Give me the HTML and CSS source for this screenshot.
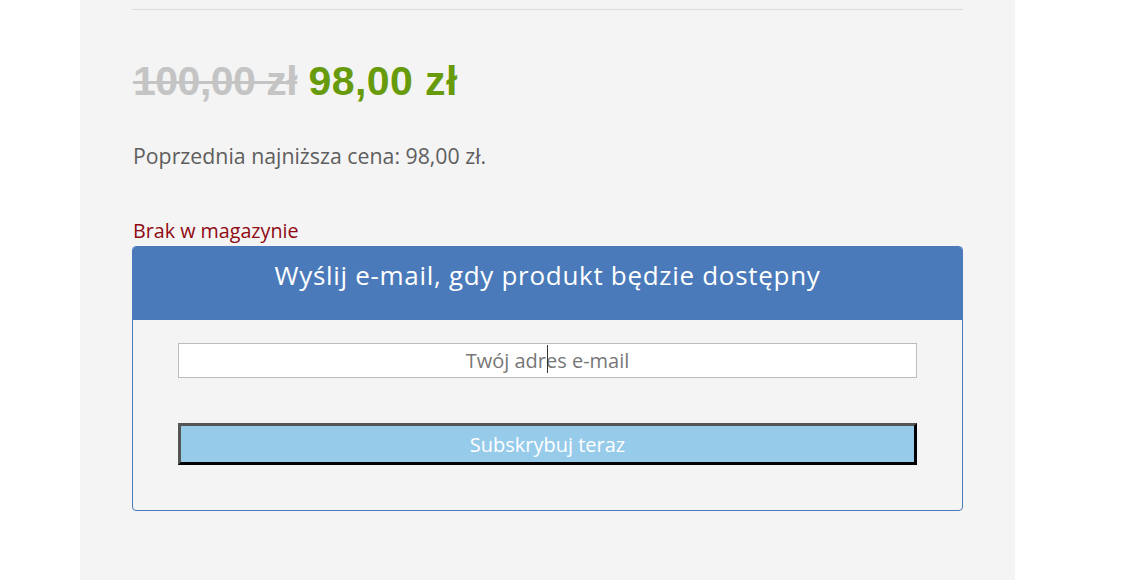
FILE: index.html
```html
<!DOCTYPE html>
<html lang="pl">
<head>
<meta charset="utf-8">
<link rel="stylesheet" href="styles.css">
</head>
<body>
<div class="panel">
  <div class="rule"></div>
  <p class="price"><del class="old">100,00 zł</del> <ins class="new">98,00 zł</ins></p>
  <p class="lowest">Poprzednia najniższa cena: 98,00 zł.</p>
  <p class="stock">Brak w magazynie</p>
  <div class="notify">
    <div class="notify-head">Wyślij e-mail, gdy produkt będzie dostępny</div>
    <div class="notify-body">
      <div class="field">
        <input class="email" type="text" placeholder="Twój adres e-mail">
        <span class="caret"></span>
      </div>
      <button class="subscribe" type="button">Subskrybuj teraz</button>
    </div>
  </div>
</div>
</body>
</html>
```
FILE: styles.css
```css
html, body {
  margin: 0;
  padding: 0;
  background: #ffffff;
}
body {
  font-family: "Open Sans", "Liberation Sans", sans-serif;
}
.panel {
  margin-left: 80px;
  width: 935px;
  height: 580px;
  box-sizing: border-box;
  padding: 9px 52px 0 52px;
  background: #f4f4f4;
}
.rule {
  height: 1px;
  background: #dcdcdc;
}
.price {
  margin: 47px 0 0 1px;
  font-family: "Liberation Sans", Arial, sans-serif;
  font-weight: bold;
  font-size: 41px;
  line-height: 48px;
}
.old {
  color: #c4c4c4;
  letter-spacing: -0.5px;
  text-decoration: line-through;
  text-decoration-thickness: 3px;
}
.new {
  color: #679b0b;
  letter-spacing: 0.4px;
  text-decoration: none;
}
.lowest {
  margin: 37px 0 0 1px;
  font-size: 21.3px;
  line-height: 28px;
  color: #5e5e5e;
}
.stock {
  margin: 47px 0 0 1px;
  font-size: 19.7px;
  line-height: 27px;
  color: #8f0a12;
}
.notify {
  margin-top: 2px;
  border: 1px solid #4a7aba;
  border-radius: 4px;
  overflow: hidden;
}
.notify-head {
  background: #4a7aba;
  color: #ffffff;
  text-align: center;
  font-size: 26px;
  letter-spacing: 0.7px;
  line-height: 34px;
  padding: 11px 0 28px;
}
.notify-body {
  padding: 23px 45px 45px;
  display: flex;
  flex-direction: column;
  gap: 45px;
}
.field {
  position: relative;
}
.email {
  display: block;
  width: 100%;
  box-sizing: border-box;
  height: 35px;
  border: 1px solid #bcbcbc;
  background: #ffffff;
  font-family: "Open Sans", "Liberation Sans", sans-serif;
  font-size: 20px;
  text-align: center;
  padding: 0;
  outline: none;
}
.email::placeholder {
  color: #777777;
}
.caret {
  position: absolute;
  left: 369px;
  top: 2px;
  width: 1px;
  height: 28px;
  background: #333;
}
.subscribe {
  display: block;
  width: 100%;
  height: 42px;
  box-sizing: border-box;
  background: #97cbea;
  color: #ffffff;
  font-family: "Open Sans", "Liberation Sans", sans-serif;
  font-size: 20px;
  border-style: solid;
  border-width: 3px;
  border-color: #555555 #000000 #000000 #555555;
  padding: 0;
}
```
